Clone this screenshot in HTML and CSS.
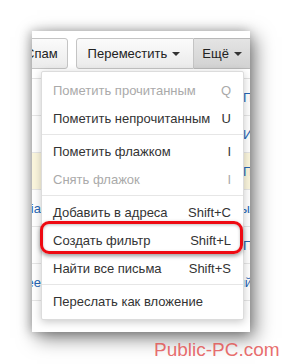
FILE: index.html
```html
<!DOCTYPE html>
<html lang="ru">
<head>
<meta charset="utf-8">
<link rel="stylesheet" href="styles.css">
</head>
<body>
<div class="stage">
  <div class="panel">
    <div class="toolbar">
      <div class="btn spam">Спам</div>
      <div class="group">
        <div class="btn move">Переместить <span class="caret"></span></div>
        <div class="btn more active">Ещё <span class="caret"></span></div>
      </div>
    </div>
    <div class="list">
      <div class="row"><span class="from">Яндекс.Почта</span><span class="subj">Посмотрите</span></div>
      <div class="row"><span class="from">Служба</span><span class="subj">Инфо</span></div>
      <div class="row unread"><span class="from">Новости</span><span class="subj">Привет</span></div>
      <div class="row"><span class="from edge">Social media</span><span class="subj">Рассылка</span></div>
      <div class="row"><span class="from">Маркет</span><span class="subj">Плюс</span></div>
      <div class="row"><span class="from edge">Free</span><span class="subj">Новый</span></div>
      <div class="row"></div>
    </div>
    <div class="menu">
      <div class="item disabled"><span>Пометить прочитанным</span><span class="key">Q</span></div>
      <div class="item"><span>Пометить непрочитанным</span><span class="key">U</span></div>
      <div class="sep"></div>
      <div class="item"><span>Пометить флажком</span><span class="key">I</span></div>
      <div class="item disabled"><span>Снять флажок</span><span class="key">I</span></div>
      <div class="sep"></div>
      <div class="item"><span>Добавить в адреса</span><span class="key">Shift+C</span></div>
      <div class="item marked"><span>Создать фильтр</span><span class="key">Shift+L</span></div>
      <div class="item"><span>Найти все письма</span><span class="key">Shift+S</span></div>
      <div class="sep"></div>
      <div class="item"><span>Переслать как вложение</span></div>
    </div>
  </div>
</div>
<div class="watermark">Public-PC.com</div>
</body>
</html>
```
FILE: styles.css
```css
html, body {
  margin: 0;
  padding: 0;
  background: #ffffff;
}
body {
  width: 284px;
  height: 364px;
  overflow: hidden;
  position: relative;
  font-family: "Liberation Sans", Arial, sans-serif;
  font-size: 13px;
  color: #333333;
}
.stage {
  padding: 31px 0 0 32px;
}
.panel {
  position: relative;
  width: 218px;
  height: 301px;
  background: #ffffff;
  overflow: hidden;
  box-shadow: 5px 6px 18px rgba(0, 0, 0, 0.5), -2px 0 10px rgba(0, 0, 0, 0.25);
}
.toolbar {
  display: flex;
  align-items: flex-start;
  gap: 8px;
  padding-top: 7px;
  height: 48px;
  box-sizing: border-box;
  border-bottom: 1px solid #e3e3e3;
}
.group {
  display: flex;
}
.btn {
  height: 31px;
  box-sizing: border-box;
  border: 1px solid #c4c4c4;
  border-radius: 3px;
  background: linear-gradient(#fbfbfb, #ebebeb);
  display: flex;
  align-items: center;
  color: #222222;
  white-space: nowrap;
}
.spam {
  margin-left: -19px;
  padding: 0 9px 0 11px;
}
.move {
  padding: 0 13px 0 11px;
  border-radius: 3px 0 0 3px;
}
.more {
  padding: 0 12px 0 8px;
  border-left: none;
  border-radius: 0 3px 3px 0;
}
.active {
  background: linear-gradient(#e4e4e4, #d2d2d2);
  border-color: #b8b8b8;
}
.caret {
  display: inline-block;
  width: 0;
  height: 0;
  margin-left: 5px;
  border-left: 4px solid transparent;
  border-right: 4px solid transparent;
  border-top: 4px solid #333333;
}
.list {
  display: flex;
  flex-direction: column;
}
.row {
  display: flex;
  align-items: center;
  height: 36px;
  border-bottom: 1px solid #e6e6e6;
  white-space: nowrap;
  color: #2566b5;
}
.row.unread {
  background: #fbf6dd;
}
.from {
  flex: none;
  width: 150px;
  padding-left: 40px;
  overflow: hidden;
}
.from.edge {
  width: 40px;
  padding-left: 0;
  margin-left: -31px;
  margin-right: 150px;
  text-align: right;
  direction: rtl;
}
.subj {
  flex: none;
  margin-left: 21px;
}
.menu {
  position: absolute;
  left: 9px;
  top: 40px;
  width: 203px;
  box-sizing: border-box;
  background: #ffffff;
  border: 1px solid #dcdcdc;
  border-radius: 2px;
  padding: 4px 0 4px;
  box-shadow: 0 2px 8px rgba(0, 0, 0, 0.22);
}
.item {
  position: relative;
  display: flex;
  align-items: center;
  justify-content: space-between;
  height: 28px;
  padding: 0 12px 0 11px;
  white-space: nowrap;
  color: #333333;
}
.item.disabled {
  color: #aaaaaa;
}
.sep {
  height: 1px;
  margin: 2px 0;
  background: #e6e6e6;
}
.marked::after {
  content: "";
  position: absolute;
  left: -2px;
  right: 0;
  top: -5px;
  bottom: 0;
  border: 3px solid #ee0a12;
  border-radius: 9px;
  box-shadow: 0 2px 4px rgba(0, 0, 0, 0.4), inset 0 1px 3px rgba(0, 0, 0, 0.25);
}
.watermark {
  position: absolute;
  left: 154px;
  top: 339px;
  font-family: "Liberation Sans", Arial, sans-serif;
  font-size: 19px;
  color: rgba(226, 72, 72, 0.8);
  white-space: nowrap;
}
```
